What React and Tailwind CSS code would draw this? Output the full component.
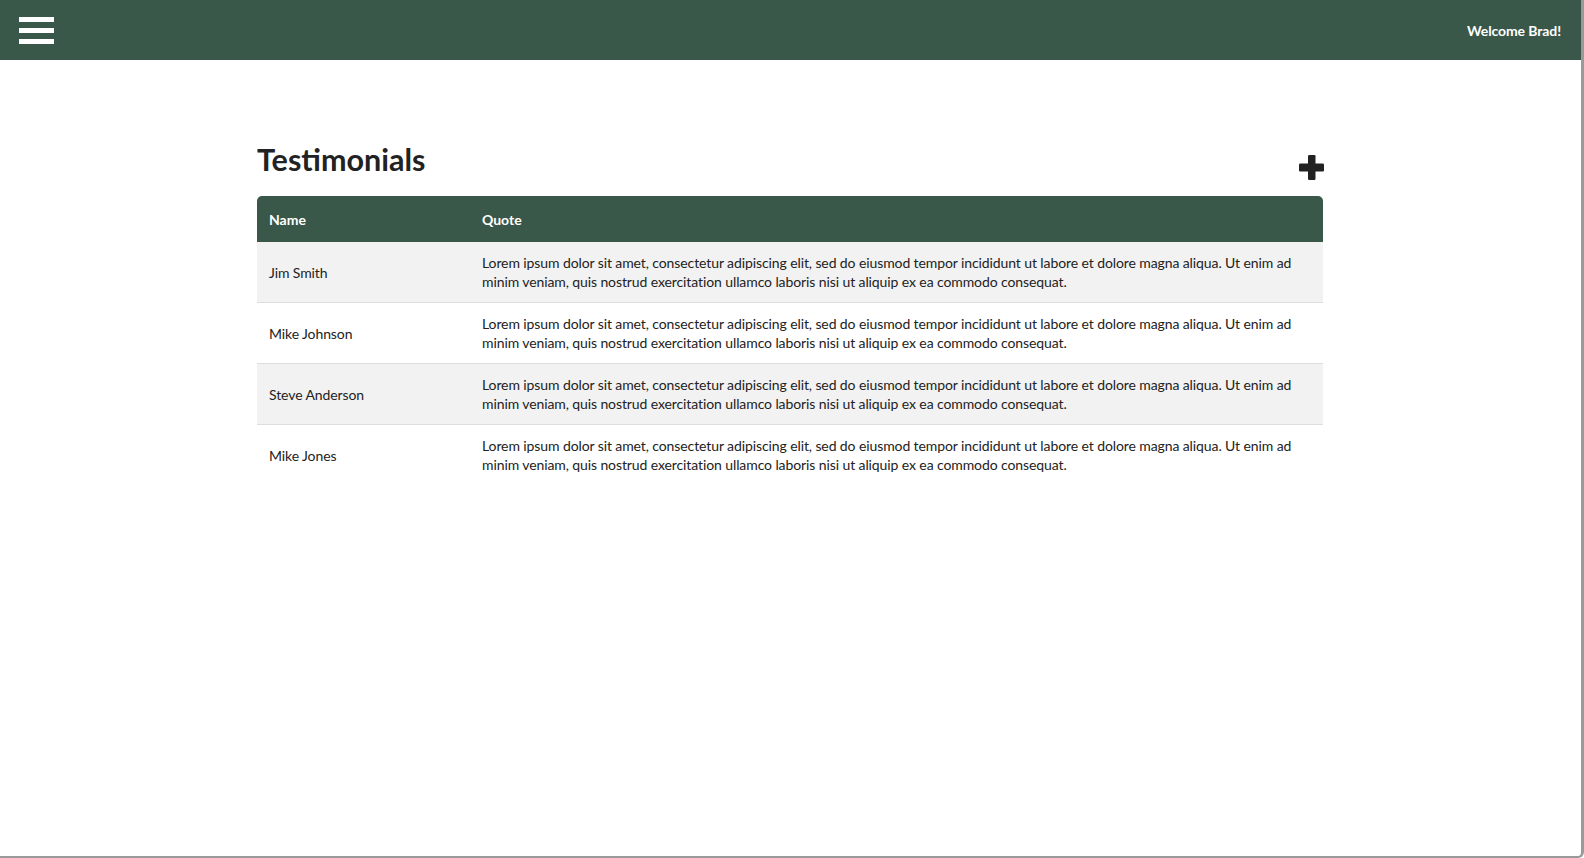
import React from "react";

const quote =
  "Lorem ipsum dolor sit amet, consectetur adipiscing elit, sed do eiusmod tempor incididunt ut labore et dolore magna aliqua. Ut enim ad minim veniam, quis nostrud exercitation ullamco laboris nisi ut aliquip ex ea commodo consequat.";

const rows = ["Jim Smith", "Mike Johnson", "Steve Anderson", "Mike Jones"];

export default function App() {
  return (
    <div
      className="w-[1584px] h-[858px] overflow-hidden bg-white flex flex-col border-r-[3px] border-b-2 border-[#9a9a9a] rounded-br-[6px]"
      style={{ fontFamily: "Lato, 'Open Sans', sans-serif" }}
    >
      <header className="h-[60px] shrink-0 bg-[#3a5849] flex items-center justify-between pl-[19px] pr-[20px]">
        <div className="flex flex-col gap-[6px]">
          <span className="block w-[35px] h-[5px] bg-white" />
          <span className="block w-[35px] h-[5px] bg-white" />
          <span className="block w-[35px] h-[5px] bg-white" />
        </div>
        <span className="text-white font-bold text-[14px] tracking-[-0.1px] mt-[1px]">Welcome Brad!</span>
      </header>
      <main className="pt-[82px] pl-[257px]">
        <div className="w-[1066px]">
          <div className="flex items-end justify-between">
            <h1 className="text-[30.5px] leading-[35px] font-bold text-[#222]">Testimonials</h1>
            <svg width="25" height="25" viewBox="0 0 25 25" className="mr-[-1px] mb-[-3px]">
              <rect x="9" y="0" width="7.5" height="25" rx="1.2" fill="#222" />
              <rect x="0" y="8.5" width="25" height="8" rx="1.2" fill="#222" />
            </svg>
          </div>
          <table className="mt-[19px] w-full border-collapse text-[#222]">
            <thead>
              <tr className="bg-[#3a5849] text-white">
                <th className="w-[213px] h-[46px] px-[12px] text-left text-[14px] font-bold rounded-tl-[5px]">Name</th>
                <th className="h-[46px] px-[12px] text-left text-[14px] font-bold rounded-tr-[5px]">Quote</th>
              </tr>
            </thead>
            <tbody>
              {rows.map((name, i) => (
                <tr
                  key={name}
                  className={
                    (i % 2 === 0 ? "bg-[#f2f2f2] " : "bg-white ") +
                    (i < rows.length - 1 ? "border-b border-[#dedede]" : "")
                  }
                >
                  <td className="px-[12px] py-[11px] align-middle text-[14px] tracking-[-0.1px] leading-[19px]">{name}</td>
                  <td className="px-[12px] py-[11px] align-middle text-[14px] tracking-[-0.1px] leading-[19px]">{quote}</td>
                </tr>
              ))}
            </tbody>
          </table>
        </div>
      </main>
    </div>
  );
}
